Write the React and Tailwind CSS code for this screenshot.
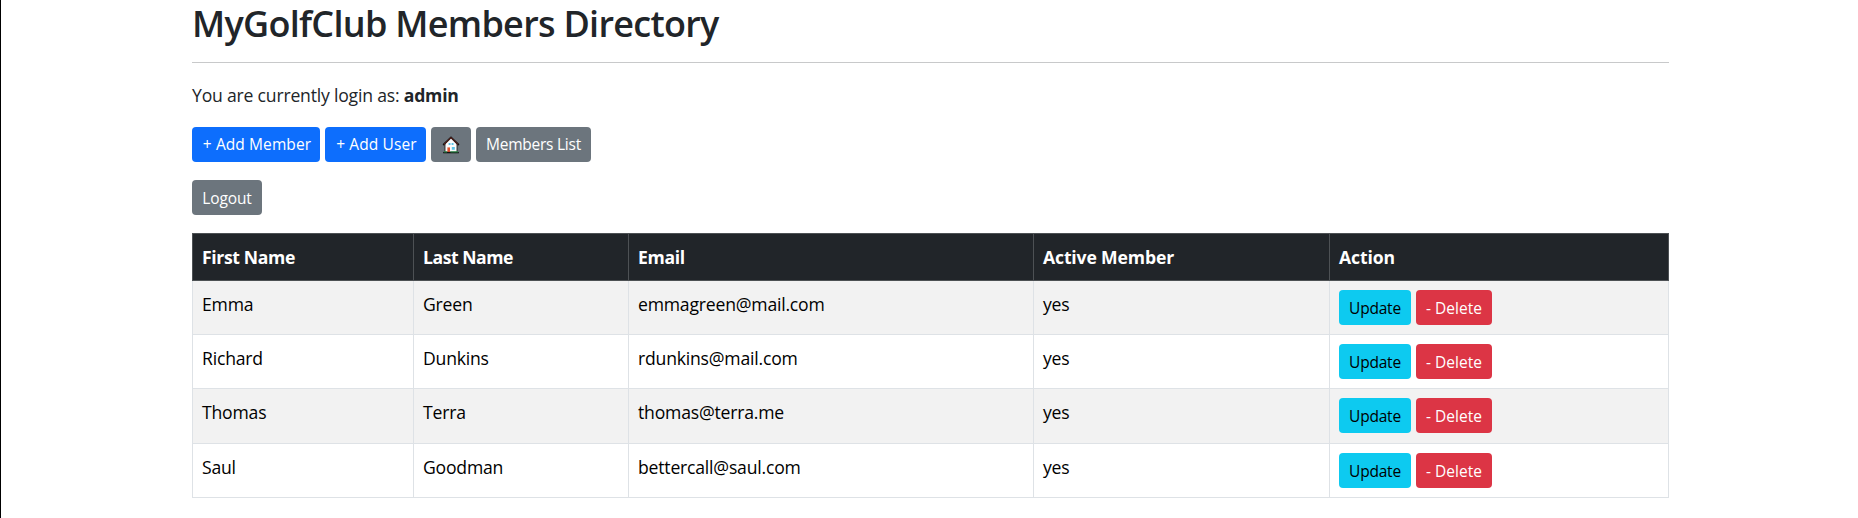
import { clsx } from "clsx";

const members = [
  { first: "Emma", last: "Green", email: "emmagreen@mail.com", active: "yes" },
  { first: "Richard", last: "Dunkins", email: "rdunkins@mail.com", active: "yes" },
  { first: "Thomas", last: "Terra", email: "thomas@terra.me", active: "yes" },
  { first: "Saul", last: "Goodman", email: "bettercall@saul.com", active: "yes" },
];

const variants = {
  primary: "bg-[#0d6efd] text-white",
  secondary: "bg-[#6c757d] text-white",
  info: "bg-[#0dcaf0] text-black",
  danger: "bg-[#dc3545] text-white",
};

function Button({ variant, className, children }) {
  return (
    <button
      type="button"
      className={clsx(
        "flex h-[35px] shrink-0 items-center justify-center rounded-[4px] text-[15.5px] leading-none whitespace-nowrap",
        variants[variant],
        className
      )}
    >
      {children}
    </button>
  );
}

function HouseIcon() {
  return (
    <svg width="18" height="18" viewBox="0 0 18 18" aria-hidden="true">
      <path d="M3 8 9 2l6 6v8H3z" fill="#fbfbfb" stroke="#111" strokeWidth="0.8" />
      <path d="M1.2 9 9 1.4 16.8 9" fill="none" stroke="#111" strokeWidth="1.8" />
      <path d="M2 8.4 9 1.6l7 6.8" fill="none" stroke="#a3372c" strokeWidth="0.7" />
      <path d="M5.4 11.4H8V16H5.4z" fill="#e0522f" />
      <path d="M6.6 7h1.9v2H6.6zM9.6 7h1.9v2H9.6zM9.8 11h3v2.8h-3z" fill="#5cc4e8" />
      <path d="M1.2 16.6h15.6" stroke="#111" strokeWidth="1.4" />
      <path d="M2 15.9h3M8.5 15.9H16" stroke="#2f9e4f" strokeWidth="1" />
    </svg>
  );
}

const cell = "border border-[#dee2e6] pl-[9px] align-top";
const head = "border border-[#4d5154] pl-[9px] text-left font-bold";

export default function App() {
  return (
    <div className="h-[518px] overflow-hidden border-l border-black bg-white pl-[191px] font-['Open_Sans','Noto_Sans',sans-serif] text-[17.6px] leading-[27px] tracking-[-0.2px] text-[#212529]">
      <div className="w-[1477px]">
        <h1 className="h-[62px] pt-[2px] text-[36px] leading-[43px] font-semibold tracking-[-0.71px]">
          MyGolfClub Members Directory
        </h1>
        <hr className="border-[#c8c9ca]" />
        <p className="h-[64px] pt-[19px]">
          You are currently login as: <strong>admin</strong>
        </p>
        <div className="flex gap-[5px]">
          <Button variant="primary" className="w-[128px] pt-px pl-[2px] tracking-[0.1px]">+ Add Member</Button>
          <Button variant="primary" className="w-[101px] pt-px pl-[2px] tracking-[0.1px]">+ Add User</Button>
          <Button variant="secondary" className="w-[40px]">
            <HouseIcon />
          </Button>
          <Button variant="secondary" className="w-[115px] pt-px tracking-[-0.25px]">Members List</Button>
        </div>
        <div className="pt-[18px] pb-[18px]">
          <Button variant="secondary" className="w-[70px] pt-[2px] tracking-[-0.1px]">Logout</Button>
        </div>
        <table className="w-[1476px] table-fixed border-collapse">
          <colgroup>
            <col className="w-[221px]" />
            <col className="w-[215px]" />
            <col className="w-[405px]" />
            <col className="w-[296px]" />
            <col className="w-[339px]" />
          </colgroup>
          <thead>
            <tr className="h-[47px] bg-[#212529] tracking-[-0.35px] text-white">
              <th className={head}>First Name</th>
              <th className={clsx(head, "tracking-[-0.45px]")}>Last Name</th>
              <th className={head}>Email</th>
              <th className={clsx(head, "tracking-[-0.15px]")}>Active Member</th>
              <th className={clsx(head, "tracking-[-0.1px]")}>Action</th>
            </tr>
          </thead>
          <tbody className="text-black">
            {members.map((m) => (
              <tr key={m.email} className="h-[54px] odd:bg-[#f2f2f2] nth-3:h-[55px]">
                <td className={clsx(cell, "pt-[10px]")}>{m.first}</td>
                <td className={clsx(cell, "pt-[10px]")}>{m.last}</td>
                <td className={clsx(cell, "pt-[10px]")}>{m.email}</td>
                <td className={clsx(cell, "pt-[10px]")}>{m.active}</td>
                <td className={clsx(cell, "pt-[9px]")}>
                  <div className="flex gap-[5px]">
                    <Button variant="info" className="w-[72px] pt-[2px]">Update</Button>
                    <Button variant="danger" className="w-[76px] pt-[2px] tracking-normal">- Delete</Button>
                  </div>
                </td>
              </tr>
            ))}
          </tbody>
        </table>
      </div>
    </div>
  );
}
